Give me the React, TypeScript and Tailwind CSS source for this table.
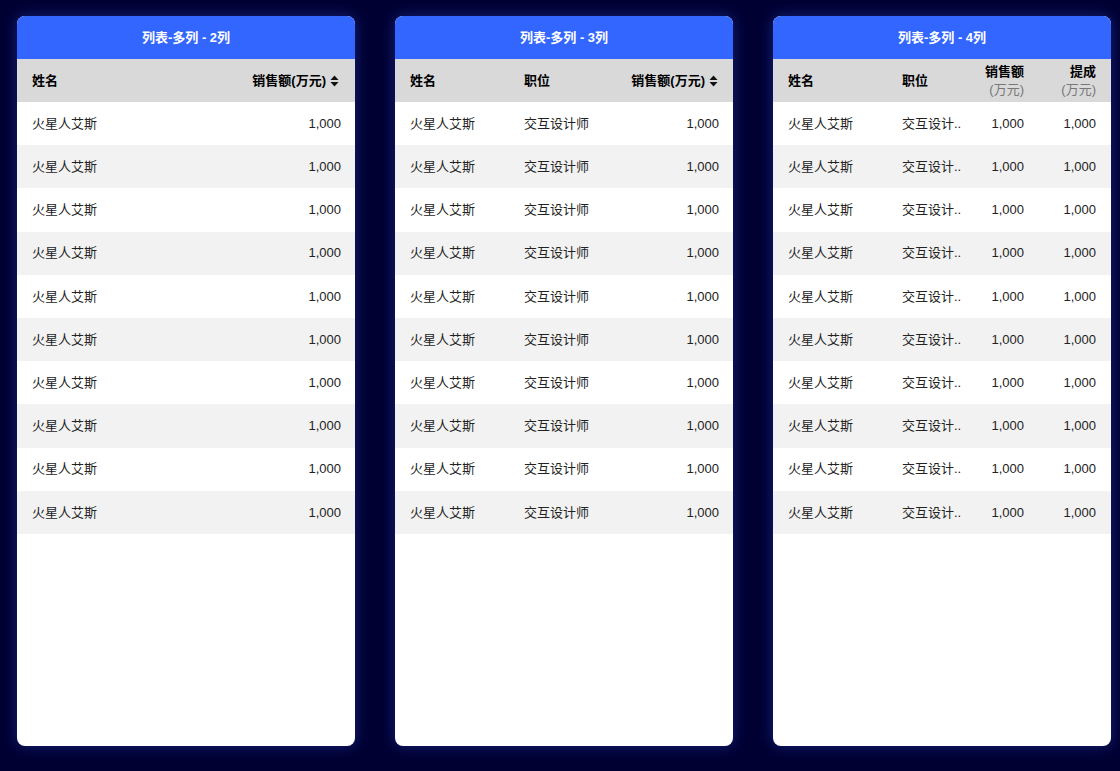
const FONT = "[font-family:'Liberation_Sans','Noto_Sans_CJK_SC',sans-serif]";

const rows = Array.from({ length: 10 }, (_, i) => i);

const SortIcon = () => (
  <svg width="9" height="12" viewBox="0 0 9 12" className="ml-1 shrink-0">
    <path d="M4.5 0.5 L8.5 5 H0.5 Z" fill="#111" />
    <path d="M4.5 11.5 L8.5 7 H0.5 Z" fill="#111" />
  </svg>
);

const Card = ({ title, children }: { title: string; children: React.ReactNode }) => (
  <div className="w-[338px] h-[730px] rounded-lg bg-white overflow-hidden shadow-[0_0_14px_rgba(60,100,255,0.35)] flex flex-col">
    <div className="h-[43px] shrink-0 bg-[#3366ff] flex items-center justify-center text-white text-[13px] font-bold">
      {title}
    </div>
    {children}
  </div>
);

const rowBg = (i: number) => (i % 2 === 0 ? "bg-white" : "bg-[#f2f2f2]");

const TwoCol = () => (
  <Card title="列表-多列 - 2列">
    <div className="h-[43px] shrink-0 bg-[#d9d9d9] flex items-center justify-between px-[15px] text-[13px] font-bold text-black">
      <span>姓名</span>
      <span className="flex items-center pr-px">
        销售额(万元)
        <SortIcon />
      </span>
    </div>
    {rows.map((i) => (
      <div
        key={i}
        className={`h-[43.2px] shrink-0 flex items-center justify-between pl-[15px] pr-[14px] text-[13px] text-[#222] ${rowBg(i)}`}
      >
        <span>火星人艾斯</span>
        <span>1,000</span>
      </div>
    ))}
  </Card>
);

const ThreeCol = () => (
  <Card title="列表-多列 - 3列">
    <div className="h-[43px] shrink-0 bg-[#d9d9d9] flex items-center px-[15px] text-[13px] font-bold text-black">
      <span className="w-[114px]">姓名</span>
      <span className="flex-1">职位</span>
      <span className="flex items-center">
        销售额(万元)
        <SortIcon />
      </span>
    </div>
    {rows.map((i) => (
      <div
        key={i}
        className={`h-[43.2px] shrink-0 flex items-center pl-[15px] pr-[14px] text-[13px] text-[#222] ${rowBg(i)}`}
      >
        <span className="w-[114px]">火星人艾斯</span>
        <span className="flex-1">交互设计师</span>
        <span>1,000</span>
      </div>
    ))}
  </Card>
);

const FourCol = () => (
  <Card title="列表-多列 - 4列">
    <div className="h-[43px] shrink-0 bg-[#d9d9d9] flex items-center px-[15px] text-[13px] text-black">
      <span className="w-[114px] font-bold">姓名</span>
      <span className="w-[66px] font-bold">职位</span>
      <div className="w-[56px] flex flex-col items-end leading-[18px]">
        <span className="font-bold">销售额</span>
        <span className="text-[#777]">(万元)</span>
      </div>
      <div className="w-[72px] flex flex-col items-end leading-[18px]">
        <span className="font-bold">提成</span>
        <span className="text-[#777]">(万元)</span>
      </div>
    </div>
    {rows.map((i) => (
      <div
        key={i}
        className={`h-[43.2px] shrink-0 flex items-center px-[15px] text-[13px] text-[#222] ${rowBg(i)}`}
      >
        <span className="w-[114px]">火星人艾斯</span>
        <span className="w-[66px] whitespace-nowrap">交互设计..</span>
        <span className="w-[56px] text-right">1,000</span>
        <span className="w-[72px] text-right">1,000</span>
      </div>
    ))}
  </Card>
);

export default function App() {
  return (
    <div className={`w-[1120px] h-[771px] bg-[#000033] pt-4 pl-[17px] flex gap-10 ${FONT}`}>
      <TwoCol />
      <ThreeCol />
      <FourCol />
    </div>
  );
}
